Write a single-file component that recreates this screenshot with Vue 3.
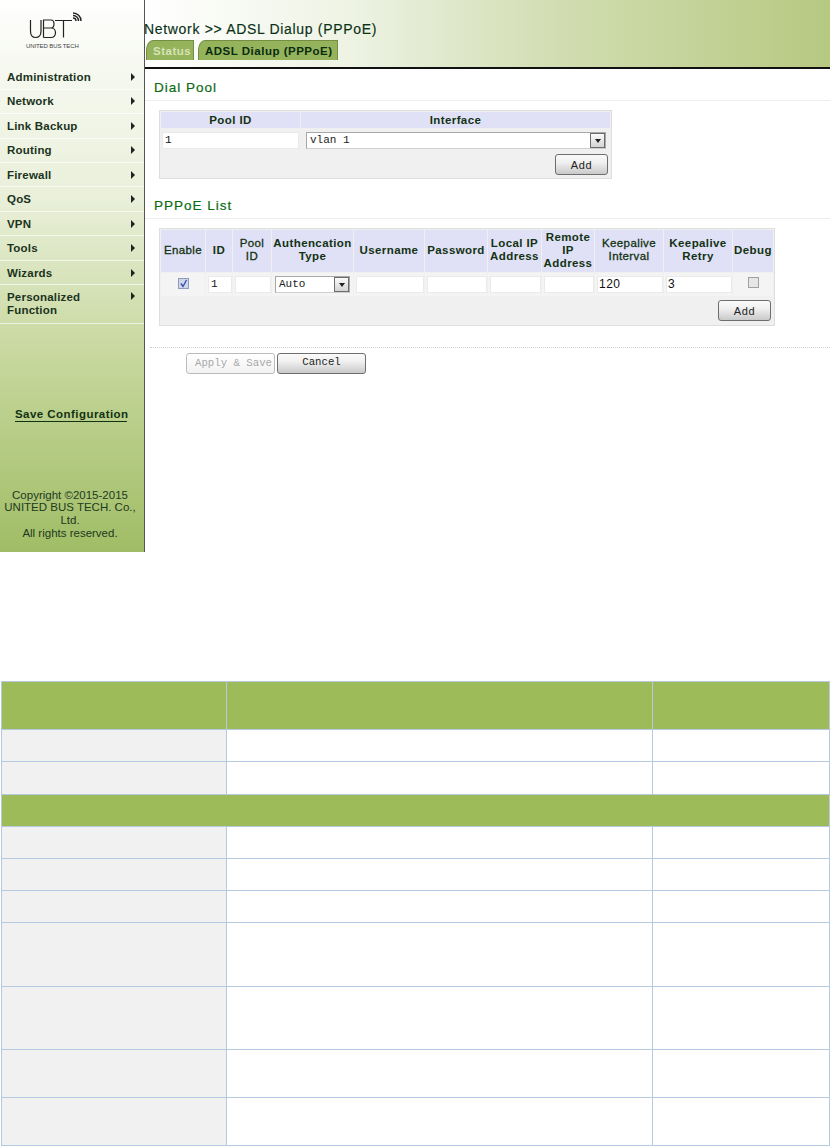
<script setup>
const menu = [
  ['Administration'], ['Network'], ['Link Backup'], ['Routing'], ['Firewall'],
  ['QoS'], ['VPN'], ['Tools'], ['Wizards'], ['Personalized', 'Function']
]
const specRows = [
  { h: 'h48', type: 'band' },
  { h: 'h32' }, { h: 'h33' },
  { h: 'h32', type: 'span' },
  { h: 'h32' }, { h: 'h32' }, { h: 'h32' },
  { h: 'h64' }, { h: 'h63' }, { h: 'h48' }, { h: 'h48' }
]
const heads = [
  { t: ['Enable'], w: 44, soft: true }, { t: ['ID'], w: 26 }, { t: ['Pool', 'ID'], w: 38, soft: true },
  { t: ['Authencation', 'Type'], w: 81 }, { t: ['Username'], w: 70 }, { t: ['Password'], w: 62 },
  { t: ['Local IP', 'Address'], w: 53 }, { t: ['Remote', 'IP', 'Address'], w: 52 },
  { t: ['Keepalive', 'Interval'], w: 68, soft: true }, { t: ['Keepalive', 'Retry'], w: 68 }, { t: ['Debug'], w: 40 }
]
</script>

<template>
  <div class="page">
    <section class="shot">
      <aside class="side">
        <div class="brand">
          <svg class="logo" width="56" height="30" viewBox="0 0 56 30" fill="none" stroke="#222" stroke-width="1.2">
            <path d="M1.500 9V20C1.500 25 4 26.500 6.500 26.500C9 26.500 12 25 12 20V9" />
            <path d="M14.500 26.500V9H22C26 9 26 17 22 17H15M22 17C28 17 28 26.500 22 26.500H14.500" />
            <path d="M26 9.500H43M34.500 9.500V26.500" />
            <path d="M44 7A3 3 0 0 1 47 10M44 4.500A5.500 5.500 0 0 1 49.500 10M44 2A8 8 0 0 1 52 10" stroke-width="1.400" />
          </svg>
          <div class="brand-name">UNITED BUS TECH</div>
        </div>
        <nav class="menu">
          <a v-for="item in menu" :key="item[0]" class="menu-item" :class="{ tall: item.length > 1 }">
            <span class="menu-text"><span v-for="l in item" :key="l" class="line">{{ l }}</span></span>
            <i class="arrow"></i>
          </a>
        </nav>
        <a class="save">Save Configuration</a>
        <div class="copy">Copyright ©2015-2015<br>UNITED BUS TECH. Co.,<br>Ltd.<br>All rights reserved.</div>
      </aside>
      <main class="main">
        <header class="top-head">
          <h1 class="crumb">Network &gt;&gt; ADSL Dialup (PPPoE)</h1>
          <div class="tabs">
            <span class="tab off">Status</span>
            <span class="tab on">ADSL Dialup (PPPoE)</span>
          </div>
        </header>
        <div class="content">
          <h2 class="title">Dial Pool</h2>
          <table class="form pool">
            <tbody>
              <tr class="hdr"><th class="c-pool">Pool ID</th><th class="c-if">Interface</th></tr>
              <tr class="row">
                <td class="pad-a"><div class="input mono">1</div></td>
                <td class="pad-b"><div class="select mono"><span>vlan 1</span><b class="drop"><i></i></b></div></td>
              </tr>
              <tr class="foot foot-pool"><td colspan="2"><button class="btn add">Add</button></td></tr>
            </tbody>
          </table>

          <h2 class="title second">PPPoE List</h2>
          <table class="form list">
            <colgroup><col v-for="h in heads" :key="h.t.join()" :style="{ width: h.w + 'px' }"></colgroup>
            <tbody>
              <tr class="hdr hdr-list">
                <th v-for="h in heads" :key="h.t.join()" :class="{ soft: h.soft }"><span v-for="l in h.t" :key="l" class="line">{{ l }}</span></th>
              </tr>
              <tr class="row row-list">
                <td class="center"><span class="check on-check"><svg width="9" height="9" viewBox="0 0 9 9"><path d="M2 4.500L4 7.500L7.500 1" fill="none" stroke="#3a4fb0" stroke-width="1.400"/></svg></span></td>
                <td><div class="input mono">1</div></td>
                <td><div class="input"></div></td>
                <td><div class="select mono narrow"><span>Auto</span><b class="drop"><i></i></b></div></td>
                <td><div class="input"></div></td>
                <td><div class="input"></div></td>
                <td><div class="input"></div></td>
                <td><div class="input"></div></td>
                <td><div class="input num">120</div></td>
                <td><div class="input num">3</div></td>
                <td class="center"><span class="check"></span></td>
              </tr>
              <tr class="foot foot-list"><td colspan="11"><button class="btn add">Add</button></td></tr>
            </tbody>
          </table>

          <div class="dots"></div>
          <div class="actions">
            <button class="btn action disabled">Apply &amp; Save</button>
            <button class="btn action cancel">Cancel</button>
          </div>
        </div>
      </main>
    </section>

    <table class="spec">
      <colgroup><col class="s1"><col class="s2"><col class="s3"></colgroup>
      <tbody>
        <tr v-for="(r, i) in specRows" :key="i" :class="[r.h, r.type]">
          <td v-if="r.type === 'span'" colspan="3"></td>
          <template v-else>
            <td class="first"></td><td></td><td></td>
          </template>
        </tr>
      </tbody>
    </table>
  </div>
</template>

<style>
html, body { margin: 0; background: #fff; }
</style>

<style scoped>
.page { width: 830px; height: 1146px; overflow: hidden; font-family: "Liberation Sans", Arial, sans-serif; color: #123212; }
.shot { display: flex; height: 552px; }
.side {
  width: 145px; flex: none; box-sizing: border-box; display: flex; flex-direction: column;
  background: linear-gradient(180deg, #ffffff 0, #f8faf3 50px, #e9efd9 200px, #c6d79c 360px, #a0bd66 552px);
  border-right: 1px solid #555;
}
.brand { height: 65.300px; box-sizing: border-box; padding: 11px 0 0 29px; }
.logo { display: block; }
.brand-name { margin: 1px 0 0 -3px; font-size: 6px; letter-spacing: -0.1px; line-height: 8px; color: #444; white-space: nowrap; }
.menu { display: flex; flex-direction: column; }
.menu-item {
  height: 24.450px; box-sizing: border-box; padding: 0 9px 0 7px; display: flex; align-items: center; justify-content: space-between;
  border-bottom: 1px solid rgba(255,255,255,.65); font-size: 11.500px; font-weight: bold; letter-spacing: .2px; color: #1b3320;
}
.menu-item.tall { height: 38.500px; align-items: flex-start; padding-top: 6px; line-height: 13px; }
.menu-text { display: block; }
.line { display: block; }
.arrow { width: 0; height: 0; border-left: 4px solid #222; border-top: 4px solid transparent; border-bottom: 4px solid transparent; }
.menu-item.tall .arrow { margin-top: 1px; }
.save { margin: 84px 0 0 15px; width: 112px; font-size: 11.500px; font-weight: bold; letter-spacing: .45px; color: #123212; border-bottom: 1px solid #123212; line-height: 13px; white-space: nowrap; }
.copy { margin-top: 67px; text-align: center; font-size: 11.500px; line-height: 12.700px; color: #1d3a1d; padding-right: 4px; white-space: nowrap; }

.main { flex: 1; min-width: 0; }
.top-head {
  height: 69px; box-sizing: border-box; border-bottom: 2px solid #111; padding: 21px 0 0 0;
  background: linear-gradient(90deg, #ffffff 0, #eef3e4 205px, #d3deb4 400px, #b6c981 685px);
}
.crumb { margin: 0 0 0 -1px; font-size: 14px; line-height: 17px; font-weight: normal; letter-spacing: .68px; color: #0a3016; white-space: nowrap; -webkit-text-stroke: .15px #0a3016; }
.tabs { display: flex; gap: 4px; margin: 2px 0 0 1px; align-items: flex-end; }
.tab {
  height: 20px; box-sizing: border-box; line-height: 20px; font-size: 11.500px; font-weight: bold; letter-spacing: .5px;
  background: #94b35a; border: 1px solid #748f44; border-bottom: 0; border-top-left-radius: 7px 10px;
}
.tab.off { width: 48px; padding-left: 6px; color: #d6e4b8; }
.tab.on { width: 140px; padding-left: 6px; color: #0b2c12; }

.title {
  margin: 0 0 9px; height: 32px; box-sizing: border-box; padding: 11px 0 0 9px; font-size: 13.500px; line-height: 16px; font-weight: normal;
  letter-spacing: 1px; color: #0b6c14; border-bottom: 1px solid #eeeeee; -webkit-text-stroke: .2px #0b6c14;
}
.title.second { margin-top: 10px; margin-bottom: 9px; padding-top: 9px; height: 30px; }
.form { border-collapse: separate; border-spacing: 1px; background: #f0f0f0; border: 1px solid #dedede; table-layout: fixed; }
.pool { margin-left: 14px; width: 453px; }
.list { margin-left: 14px; width: 616px; }
.c-pool { width: 139px; }
.form td, .form th { padding: 0; box-sizing: border-box; }
.hdr th { background: #e0e0f6; font-size: 11.500px; font-weight: bold; letter-spacing: .4px; color: #123212; height: 16px; line-height: 13px; white-space: nowrap; }
.hdr-list th { height: 42px; padding-bottom: 2px; }
.hdr-list th.soft { font-weight: normal; -webkit-text-stroke: .3px #123212; }
.row td { height: 21px; }
.form .pad-a { padding: 3px 1px 0 1px; vertical-align: top; }
.form .pad-b { padding: 3px 4px 0 5px; vertical-align: top; }
.row-list td { height: 23px; padding: 3px 0 0 2px; background: #f4f4f4; vertical-align: top; }
.form .center { text-align: center; vertical-align: top; padding: 1px 0 0; }
.input { height: 17px; box-sizing: border-box; background: #fff; border: 1px solid #eaeaea; line-height: 15px; font-size: 11px; padding-left: 2px; color: #111; overflow: hidden; white-space: nowrap; }
.mono { font-family: "Liberation Mono", monospace; font-size: 11px; }
.num { font-size: 12px; letter-spacing: .5px; padding-left: 1px; }
.select { height: 17px; box-sizing: border-box; background: #fff; border: 1px solid #a8a8a8; border-bottom-color: #d0d0d0; padding-left: 3px; line-height: 15px; display: flex; justify-content: space-between; color: #222; white-space: nowrap; }
.narrow { margin-right: 3px; margin-left: 1px; }
.drop { width: 15px; height: 15px; box-sizing: border-box; border: 1px solid #6c6c6c; background: linear-gradient(180deg,#fafafa,#d4d4d4); display: flex; align-items: center; justify-content: center; flex: none; }
.drop i { width: 0; height: 0; border-left: 3.500px solid transparent; border-right: 3.500px solid transparent; border-top: 4px solid #222; }
.check { display: inline-block; width: 11px; height: 11px; box-sizing: border-box; margin-top: 1px; border: 1px solid #a0a0a0; background: #e6e6e6; line-height: 0; }
.on-check { background: #cfd6ec; border-color: #8f9cb8; }
.foot td { background: #f0f0f0; text-align: right; vertical-align: top; }
.foot-pool td { height: 26px; padding: 3px 2px 0 0; }
.foot-list td { height: 27px; padding: 3px 2px 0 0; }
.btn {
  display: block; margin: 0 0 0 auto; box-sizing: border-box; border: 1px solid #6e6e6e; border-radius: 3px; padding: 0; cursor: default;
  background: linear-gradient(180deg, #fafafa, #f0f0f0 40%, #c9c9c9); color: #222; font-family: "Liberation Sans", sans-serif; font-size: 11px; letter-spacing: .6px;
}
.add { width: 53px; height: 21px; }
.dots { height: 0; margin-top: 21px; border-top: 1px dotted #cfcfcf; margin-left: 5px; }
.actions { display: flex; gap: 2px; margin: 5px 0 0 41px; }
.action { height: 21px; margin: 0; font-family: "Liberation Mono", monospace; font-size: 10.700px; letter-spacing: 0; line-height: 17px; }
.disabled { width: 89px; padding-left: 6px; white-space: nowrap; overflow: hidden; color: #a8a8a8; border-color: #bbbbbb; background: linear-gradient(180deg, #fff, #f2f2f2); }
.cancel { width: 89px; padding-bottom: 2px; }

.spec { margin: 129px 0 0 1px; width: 828px; border-collapse: collapse; table-layout: fixed; }
.s1 { width: 225px; } .s2 { width: 426px; } .s3 { width: 177px; }
.spec td { border: 1px solid #b5c9e3; padding: 0; box-sizing: border-box; background: #fff; }
.spec .first { background: #f1f1f1; }
.spec .band td, .spec .span td { background: #9dbb59; }
.h32 td { height: 32px; } .h33 td { height: 33px; } .h48 td { height: 48px; } .h63 td { height: 63px; } .h64 td { height: 64px; }
</style>
